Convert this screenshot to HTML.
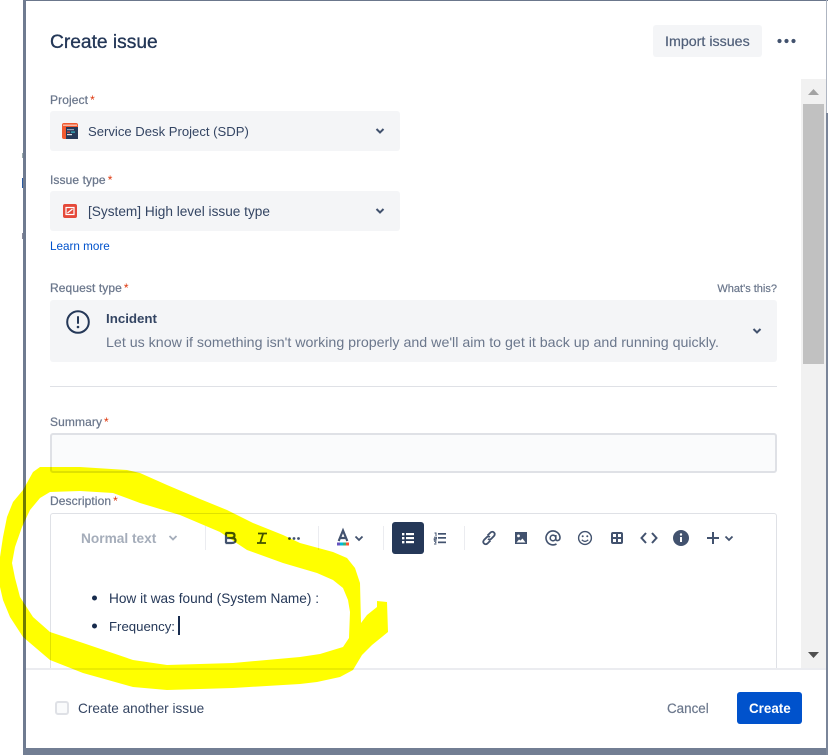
<!DOCTYPE html>
<html>
<head>
<meta charset="utf-8">
<title>Create issue</title>
<style>
html,body{margin:0;padding:0;background:#fff}
body{width:828px;height:755px;position:relative;overflow:hidden;font-family:"Liberation Sans",sans-serif;color:#172b4d}
.a{position:absolute}
.t{position:absolute;white-space:nowrap;height:20px;line-height:20px;font-size:14px}
.lbl{font-size:12px;color:#6b778c;-webkit-text-stroke:.25px #6b778c;letter-spacing:.1px}
.lbl i{font-style:normal;color:#de350b;margin-left:2px;-webkit-text-stroke:0}
.sel{position:absolute;background:#f4f5f7;border-radius:3px}
.sep{position:absolute;top:526px;width:1px;height:24px;background:#ebecf0}
svg{position:absolute;overflow:visible}
</style>
</head>
<body>
<!-- background -->
<div class="a" style="left:23px;top:0;width:805px;height:1px;background:#6b778c"></div>
<div class="a" style="left:23px;top:0;width:3px;height:755px;background:#6f7b90"></div>
<div class="a" style="left:23px;top:748px;width:805px;height:7px;background:#727e93"></div>
<div class="a" style="left:826px;top:113px;width:2px;height:642px;background:#7a8599"></div>
<div class="a" style="left:826px;top:0;width:1px;height:113px;background:#aeb5c1"></div>
<div class="a" style="left:22px;top:153px;width:1px;height:5px;background:#9aa"></div>
<div class="a" style="left:22px;top:178px;width:1px;height:10px;background:#2a5aa0"></div>
<div class="a" style="left:22px;top:233px;width:1px;height:6px;background:#889"></div>

<!-- modal -->
<div class="a" style="left:26px;top:1px;width:800px;height:747px;background:#fff;border-radius:3px"></div>

<div class="t" style="left:50px;top:30px;height:26px;line-height:26px;font-size:19.2px;-webkit-text-stroke:.3px #172b4d;color:#253858">Create issue</div>
<div class="a" style="left:653px;top:25px;width:109px;height:32px;background:#f4f5f7;border-radius:3px"></div>
<div class="t" style="left:665px;top:32px;color:#505f79;font-size:14.25px;-webkit-text-stroke:.2px #505f79">Import issues</div>
<svg style="left:0;top:0" width="828" height="755">
<g fill="#42526e"><circle cx="779.5" cy="41" r="2.1"/><circle cx="786.5" cy="41" r="2.1"/><circle cx="793.5" cy="41" r="2.1"/></g>
</svg>

<!-- scrollbar -->
<div class="a" style="left:801px;top:79px;width:25px;height:589px;background:#f1f1f1"></div>
<div class="a" style="left:803px;top:104px;width:21px;height:260px;background:#c1c1c1"></div>
<svg style="left:0;top:0" width="828" height="755">
<path d="M808 95 L813.5 89 L819 95Z" fill="#a3a3a3"/>
<path d="M808 652 L819 652 L813.5 658Z" fill="#505050"/>
</svg>

<!-- project -->
<div class="t lbl" style="left:50px;top:90px">Project<i>*</i></div>
<div class="sel" style="left:50px;top:111px;width:350px;height:40px"></div>
<svg style="left:62px;top:123px" width="16" height="16" viewBox="0 0 16 16">
<rect width="16" height="16" rx="2" fill="#f15a30"/>
<rect x="4" y="4" width="12" height="12" fill="#253858"/>
<rect x="1" y="1.5" width="14" height="1.5" fill="#f9b9a6"/>
<rect x="5" y="6" width="7" height="1.2" fill="#8fa0b8"/>
<rect x="5" y="8.5" width="3" height="1.2" fill="#e5493a"/>
<rect x="9" y="8.5" width="4" height="1.2" fill="#36b8c9"/>
<rect x="5" y="11" width="5" height="1.2" fill="#dfe1e6"/>
</svg>
<div class="t" style="left:88px;top:122px;color:#344563;font-size:13.1px">Service Desk Project (SDP)</div>
<svg style="left:375px;top:127px" width="10" height="8" viewBox="0 0 10 8"><path d="M1.5 2 L5 5.5 L8.5 2" fill="none" stroke="#42526e" stroke-width="2"/></svg>

<!-- issue type -->
<div class="t lbl" style="left:50px;top:170px">Issue type<i>*</i></div>
<div class="sel" style="left:50px;top:191px;width:350px;height:40px"></div>
<svg style="left:63px;top:204px" width="14" height="14" viewBox="0 0 14 14">
<rect width="14" height="14" rx="2" fill="#e5493a"/>
<rect x="3" y="3.5" width="8" height="7" fill="none" stroke="#fff" stroke-width="1.2"/>
<path d="M4.5 9 L9.5 5" stroke="#fff" stroke-width="1.2"/>
</svg>
<div class="t" style="left:88px;top:202px;color:#344563;font-size:13.65px">[System] High level issue type</div>
<svg style="left:375px;top:207px" width="10" height="8" viewBox="0 0 10 8"><path d="M1.5 2 L5 5.5 L8.5 2" fill="none" stroke="#42526e" stroke-width="2"/></svg>
<div class="t" style="left:50px;top:236px;font-size:11.7px;color:#0052cc;line-height:21px">Learn more</div>

<!-- request type -->
<div class="t lbl" style="left:50px;top:278px">Request type<i>*</i></div>
<div class="t" style="right:51px;top:279px;font-size:11px;color:#6b778c;-webkit-text-stroke:.2px #6b778c">What's this?</div>
<div class="sel" style="left:50px;top:300px;width:727px;height:62px"></div>
<svg style="left:66px;top:310px" width="24" height="24" viewBox="0 0 24 24">
<circle cx="12" cy="12" r="10.8" fill="none" stroke="#253858" stroke-width="2"/>
<rect x="11" y="6" width="2" height="8" rx="1" fill="#253858"/>
<circle cx="12" cy="17" r="1.3" fill="#253858"/>
</svg>
<div class="t" style="left:106px;top:309px;font-weight:700;color:#344563;font-size:13.3px">Incident</div>
<div class="t" style="left:106px;top:333px;color:#6b778c;font-size:14.22px">Let us know if something isn't working properly and we'll aim to get it back up and running quickly.</div>
<svg style="left:752px;top:327px" width="10" height="8" viewBox="0 0 10 8"><path d="M1.5 2 L5 5.5 L8.5 2" fill="none" stroke="#42526e" stroke-width="2"/></svg>
<div class="a" style="left:50px;top:386px;width:727px;height:1px;background:#dfe1e6"></div>

<!-- summary -->
<div class="t lbl" style="left:50px;top:412px">Summary<i>*</i></div>
<div class="a" style="left:50px;top:433px;width:723px;height:36px;background:#fafbfc;border:2px solid #dfe1e6;border-radius:3px"></div>

<!-- description -->
<div class="t lbl" style="left:50px;top:491px">Description<i>*</i></div>
<div class="a" style="left:50px;top:513px;width:725px;height:156px;border:1px solid #dfe1e6;border-bottom:0;border-radius:3px 3px 0 0"></div>
<div class="t" style="left:81px;top:529px;font-weight:700;color:#a5adba;font-size:13.7px">Normal text</div>
<svg style="left:168px;top:534px" width="10" height="8" viewBox="0 0 10 8"><path d="M1.5 2 L5 5.5 L8.5 2" fill="none" stroke="#a5adba" stroke-width="1.8"/></svg>
<div class="sep" style="left:205px"></div>
<div class="sep" style="left:318px"></div>
<div class="sep" style="left:383px"></div>
<div class="sep" style="left:464px"></div>
<div class="a" style="left:392px;top:522px;width:32px;height:32px;background:#253858;border-radius:3px"></div>

<svg style="left:0;top:0" width="828" height="755" fill="none">
<!-- B -->
<path d="M225.5 533 H231.5 Q234.5 533 234.5 535.5 Q234.5 538 231.5 538 H225.5 M231.5 538 Q235.5 538 235.5 540.5 Q235.5 543 231.5 543 H225.5 M226 533 V543" stroke="#42526e" stroke-width="2.2"/>
<!-- I -->
<path d="M258 533.5 H267 M257 543 H266 M263.2 533.5 L260.2 543" stroke="#42526e" stroke-width="1.8"/>
<g fill="#42526e"><circle cx="289.5" cy="538.5" r="1.4"/><circle cx="294" cy="538.5" r="1.4"/><circle cx="298.5" cy="538.5" r="1.4"/></g>
<!-- A -->
<path d="M338.7 541 L343 530.5 L347.3 541 M340 538 H346" stroke="#42526e" stroke-width="2.2"/>
<rect x="337" y="542.5" width="3" height="3" fill="#6554c0"/>
<rect x="340" y="542.5" width="3" height="3" fill="#00b8d9"/>
<rect x="343" y="542.5" width="3" height="3" fill="#36b37e"/>
<rect x="346" y="542.5" width="3" height="3" fill="#ff5630"/>
<path d="M355.5 536.5 L359 540 L362.5 536.5" stroke="#42526e" stroke-width="1.8"/>
<!-- bullet list -->
<g fill="#fff"><rect x="402" y="533" width="2.4" height="2.4"/><rect x="402" y="537" width="2.4" height="2.4"/><rect x="402" y="541" width="2.4" height="2.4"/>
<rect x="406" y="533" width="8" height="2.2"/><rect x="406" y="537" width="8" height="2.2"/><rect x="406" y="541" width="8" height="2.2"/></g>
<!-- ordered list -->
<g fill="#42526e"><rect x="438" y="533" width="8" height="1.7"/><rect x="438" y="537" width="8" height="1.7"/><rect x="438" y="541.5" width="8" height="1.7"/></g>
<path d="M434.5 533 H436 V536 M434 537.3 H436.4 V538.8 H434.2 V540 H436.6 M434 541.3 H436.4 M435 542.6 H436.4 M434 544 H436.4" stroke="#42526e" stroke-width="1"/>
<!-- link -->
<path d="M487.5 535.5 L490.5 532.5 Q492.5 531 494 532.5 Q495.5 534 494 536 L491 539 Q489.5 540 488 539 M490.5 540.5 L487.5 543.5 Q485.5 545 484 543.5 Q482.5 542 484 540 L487 537 Q488.5 536 490 537" stroke="#42526e" stroke-width="1.8"/>
<!-- image -->
<path fill-rule="evenodd" clip-rule="evenodd" d="M515 532 H527 V544 H515Z M518.5 534.5 A1.4 1.4 0 1 0 518.5 537.3 A1.4 1.4 0 1 0 518.5 534.5Z M516.5 542.5 H525.5 L522.5 538.5 L520.5 540.5 L519 539.5Z" fill="#42526e"/>
<!-- @ -->
<circle cx="553" cy="538" r="2.8" stroke="#42526e" stroke-width="1.6"/>
<path d="M555.8 535 V539 Q556 541 558 540.5 Q560 540 560 537.5 A7 7 0 1 0 556.5 544" stroke="#42526e" stroke-width="1.6"/>
<!-- smile -->
<circle cx="585" cy="538" r="6.4" stroke="#42526e" stroke-width="1.4"/>
<circle cx="582.7" cy="536.3" r="1" fill="#42526e"/><circle cx="587.3" cy="536.3" r="1" fill="#42526e"/>
<path d="M581.8 539.8 Q585 543 588.2 539.8" stroke="#42526e" stroke-width="1.3"/>
<!-- table -->
<rect x="611" y="532" width="12" height="12" rx="2" fill="#42526e"/>
<g fill="#fff"><rect x="613" y="534" width="3" height="3"/><rect x="618" y="534" width="3" height="3"/><rect x="613" y="539" width="3" height="3"/><rect x="618" y="539" width="3" height="3"/></g>
<!-- code -->
<path d="M646 533 L641.5 538 L646 543 M652 533 L656.5 538 L652 543" stroke="#42526e" stroke-width="2"/>
<!-- info -->
<circle cx="681" cy="538" r="8" fill="#42526e"/>
<rect x="680" y="537" width="2" height="5" fill="#fff"/><circle cx="681" cy="534.5" r="1.2" fill="#fff"/>
<!-- plus -->
<path d="M713 532 V544 M707 538 H719" stroke="#42526e" stroke-width="2"/>
<path d="M725.5 536.5 L729 540 L732.5 536.5" stroke="#42526e" stroke-width="1.8"/>
<!-- bullets -->
<circle cx="94.5" cy="598" r="2.5" fill="#172b4d"/>
<circle cx="94.5" cy="626" r="2.5" fill="#172b4d"/>
</svg>
<div class="t" style="left:109px;top:589px;color:#253858;font-size:13.65px">How it was found (System Name) :</div>
<div class="t" style="left:109px;top:617px;color:#253858;font-size:13.2px">Frequency:</div>
<div class="a" style="left:178px;top:616px;width:2px;height:19px;background:#172b4d"></div>

<!-- footer -->
<div class="a" style="left:26px;top:668px;width:800px;height:80px;background:#fff;border-top:2px solid #ebecf0;box-sizing:border-box;border-radius:0 0 3px 3px"></div>
<div class="a" style="left:55px;top:701px;width:10px;height:10px;border:2px solid #dfe1e6;border-radius:3px;background:#fafbfc"></div>
<div class="t" style="left:78px;top:699px;color:#344563;font-size:13.6px">Create another issue</div>
<div class="t" style="left:667px;top:699px;color:#6b778c;font-size:13.4px;-webkit-text-stroke:.2px #6b778c">Cancel</div>
<div class="a" style="left:737px;top:692px;width:65px;height:32px;background:#0052cc;border-radius:3px"></div>
<div class="t" style="left:749px;top:699px;color:#fff;font-weight:700;font-size:13.4px">Create</div>

<!-- highlighter -->
<svg style="left:0;top:0;mix-blend-mode:multiply" width="828" height="755">
<path fill="#ffff00" fill-rule="evenodd" d="M33 472 L40 467 L80 467 L127 470 L140 473 L167 485 L200 499 L227 510 L253 523 L283 535 L300 543 L333 552 L347 558 L355 568 L360 583 L361 623 L367 615 L377 607 L377 601 L387 602 L388 632 L372 645 L362 655 L353 670 L340 677 L317 682 L300 684 L233 688 L167 690 L133 687 L83 673 L50 660 L23 637 L10 617 L3 600 L0 587 L0 557 L3 537 L7 517 L13 502 L23 490 Z M50 492 L40 498 L30 510 L22 527 L15 547 L12 563 L15 578 L20 597 L33 617 L50 632 L83 643 L133 660 L167 665 L233 663 L300 657 L320 654 L343 647 L349 638 L350 612 L348 600 L343 588 L333 580 L317 573 L300 568 L283 563 L247 550 L220 532 L180 515 L140 503 L113 493 L80 491 Z"/>
</svg>
</body>
</html>
